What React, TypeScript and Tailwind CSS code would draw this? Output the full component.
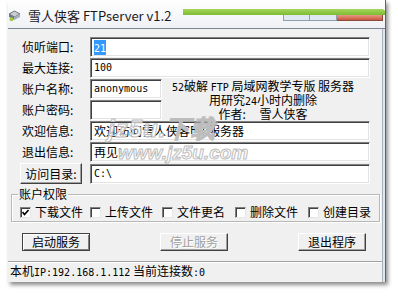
import React from "react";

const M = ({ children }: { children: React.ReactNode }) => (
  <span className="font-['DejaVu_Sans_Mono',monospace] text-[10px]">{children}</span>
);

const sunken =
  "bg-white border border-[#808080] border-b-white border-r-white shadow-[inset_1px_1px_0_#404040,inset_-1px_-1px_0_#e3e3e3] flex items-center pl-[3px] overflow-hidden whitespace-nowrap";

const raised =
  "bg-[#f0f0f0] border border-white border-r-[#404040] border-b-[#404040] shadow-[inset_-1px_-1px_0_#a0a0a0] flex items-center justify-center";

function Row({ label, children, w = "w-[280px]" }: { label: string; children?: React.ReactNode; w?: string }) {
  return (
    <div className="flex h-[20px] items-center">
      <div className="w-[68px]">{label}</div>
      <div className={`${w} h-[20px] ${sunken}`}>{children}</div>
    </div>
  );
}

function Check({ label, checked, w }: { label: string; checked?: boolean; w: string }) {
  return (
    <div className={`flex items-center gap-[4px] ${w}`}>
      <div className="w-[11px] h-[11px] bg-white border border-[#808080] border-b-[#e6e6e6] border-r-[#e6e6e6] shadow-[inset_1px_1px_0_#404040] flex items-center justify-center">
        {checked && (
          <svg width="7" height="7" viewBox="0 0 7 7">
            <polyline points="0.5,3 2.5,5.5 6.5,1" fill="none" stroke="#000" strokeWidth="1.6" />
          </svg>
        )}
      </div>
      <span>{label}</span>
    </div>
  );
}

export default function App() {
  return (
    <div className="w-[398px] h-[298px] bg-white overflow-hidden font-['Noto_Sans_CJK_SC',sans-serif] text-[12px] text-black leading-[16px]">
      <div className="ml-[8px] w-[378px] h-[282px] flex flex-col border-r border-[#5b6570] shadow-[2px_3px_4px_rgba(0,0,0,0.45)]">
        {/* title bar */}
        <div className="h-[31px] flex items-start border-b border-[#7d8794] bg-linear-to-b from-white to-[#eef1f5]">
          <div className="flex items-center pt-[9px] h-[23px]">
            <svg width="13" height="12" viewBox="0 0 13 12">
              <path d="M1 4 L6.5 1 L12 4 L6.5 7 Z" fill="#c9ced6" stroke="#555" strokeWidth="0.8" />
              <path d="M1 4 V7 L6.5 10 V7 Z" fill="#6f7986" />
              <path d="M12 4 V7 L6.5 10 V7 Z" fill="#a6afba" />
              <circle cx="3.5" cy="9.3" r="2" fill="#a4c83a" />
            </svg>
            <span className="ml-[7px] text-[13px] text-[#1a1a1a]">雪人侠客 FTPserver v1.2</span>
          </div>
          <div className="flex-1" />
          <div className="w-[202px] pt-[9px] flex flex-col items-end">
            <div className="w-full h-[6px] bg-linear-to-b from-[#a6d65a] to-[#7cbc32] rounded-tr-[3px]" />
            <div className="flex h-[6px] mr-[2px]">
              <div className="w-[27px] bg-[#dfe7f0] border border-t-0 border-[#8f9eae]" />
              <div className="w-[27px] bg-[#dfe7f0] border border-t-0 border-l-0 border-[#8f9eae]" />
              <div className="w-[46px] bg-linear-to-b from-[#e59a86] to-[#c9553c] border border-t-0 border-l-0 border-[#8a4a3c]" />
            </div>
          </div>
        </div>

        {/* client area */}
        <div className="flex-1 flex">
          <div className="flex-1 bg-[#f0f0f0] flex flex-col relative">
            <div className="flex flex-col gap-[1px] pl-[14px] pt-[8px]">
              <Row label="侦听端口:">
                <span className="bg-[#3399ff] text-white leading-[13px]">
                  <M>21</M>
                </span>
              </Row>
              <Row label="最大连接:">
                <M>100</M>
              </Row>
              <div className="flex">
                <div className="flex flex-col gap-[1px]">
                  <Row label="账户名称:" w="w-[72px]">
                    <M>anonymous</M>
                  </Row>
                  <Row label="账户密码:" w="w-[72px]" />
                </div>
                <div className="ml-[5px] mt-[1px] w-[192px] text-center leading-[12px] whitespace-nowrap">
                  <div>
                    <M>52</M>破解 <M>FTP</M> 局域网教学专版 服务器
                  </div>
                  <div>
                    用研究<M>24</M>小时内删除
                  </div>
                  <div>作者:&nbsp;&nbsp;&nbsp;&nbsp;&nbsp;雪人侠客</div>
                </div>
              </div>
              <Row label="欢迎信息:">
                欢迎访问雪人侠客<M>FTP</M>服务器
              </Row>
              <Row label="退出信息:">再见!</Row>
              <div className="flex h-[21px] items-center">
                <div className={`-ml-[2px] w-[62px] h-[21px] ${raised}`}>访问目录:</div>
                <div className={`ml-[8px] w-[280px] h-[20px] ${sunken}`}>
                  <M>C:\</M>
                </div>
              </div>
            </div>

            <fieldset className="mt-[4px] ml-[3px] mr-[2px] border border-[#b8b8b8] shadow-[inset_1px_1px_0_#fff,1px_1px_0_#fff]">
              <legend className="ml-[6px] px-[1px] leading-[12px]">账户权限</legend>
              <div className="flex items-center h-[12px] pl-[8px] mt-[6px] mb-[3px]">
                <Check label="下载文件" checked w="w-[70px]" />
                <Check label="上传文件" w="w-[72px]" />
                <Check label="文件更名" w="w-[73px]" />
                <Check label="删除文件" w="w-[73px]" />
                <Check label="创建目录" w="w-[70px]" />
              </div>
            </fieldset>

            <div className="flex mt-[11px] pl-[14px] gap-[70px]">
              <div className="w-[68px] h-[18px] bg-[#f0f0f0] border border-[#404040] shadow-[inset_1px_1px_0_#fff,inset_-1px_-1px_0_#808080] flex items-center justify-center">
                启动服务
              </div>
              <div className={`w-[68px] h-[18px] ${raised} text-[#a0a0a0] [text-shadow:1px_1px_0_#fff]`}>停止服务</div>
              <div className={`w-[68px] h-[18px] ${raised}`}>退出程序</div>
            </div>

            <div className="mt-[10px] flex-1 border-t border-[#a0a0a0] shadow-[inset_0_1px_0_#fff] pl-[2px] leading-[18px] whitespace-nowrap">
              本机<M>IP:192.168.1.112</M> 当前连接数<M>:0</M>
            </div>

            <div
              aria-hidden="true"
              className="absolute left-[100px] top-[88px] pointer-events-none font-['Liberation_Sans',sans-serif] font-bold italic text-white/70 [-webkit-text-stroke:1px_#bdbdbd] leading-none"
            >
              <div className="text-[24px] tracking-[1px]">jz5u.下载</div>
              <div className="text-[19px] ml-[10px] mt-[2px]">www.jz5u.com</div>
            </div>
          </div>
          <div className="w-[3px] bg-[#dfe6ee] border-l border-[#a8b2bc]" />
        </div>
      </div>
    </div>
  );
}
